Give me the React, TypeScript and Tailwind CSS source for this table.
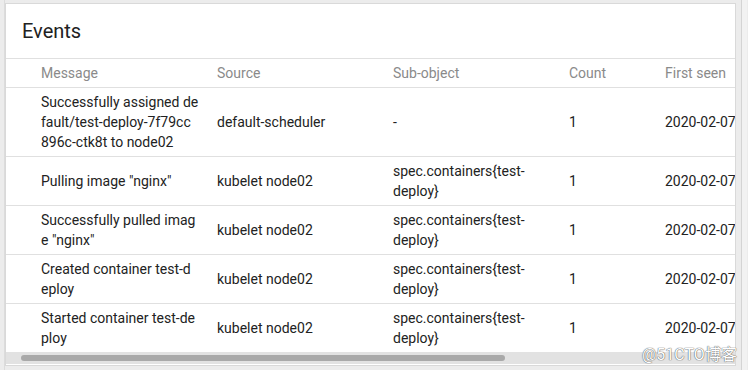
import React from 'react';

type EventRow = {
  message: string[];
  source: string;
  subObject: string[];
  count: string;
  firstSeen: string;
};

const events: EventRow[] = [
  {
    message: ['Successfully assigned de', 'fault/test-deploy-7f79cc', '896c-ctk8t to node02'],
    source: 'default-scheduler',
    subObject: ['-'],
    count: '1',
    firstSeen: '2020-02-07',
  },
  {
    message: ['Pulling image "nginx"'],
    source: 'kubelet node02',
    subObject: ['spec.containers{test-', 'deploy}'],
    count: '1',
    firstSeen: '2020-02-07',
  },
  {
    message: ['Successfully pulled imag', 'e "nginx"'],
    source: 'kubelet node02',
    subObject: ['spec.containers{test-', 'deploy}'],
    count: '1',
    firstSeen: '2020-02-07',
  },
  {
    message: ['Created container test-d', 'eploy'],
    source: 'kubelet node02',
    subObject: ['spec.containers{test-', 'deploy}'],
    count: '1',
    firstSeen: '2020-02-07',
  },
  {
    message: ['Started container test-de', 'ploy'],
    source: 'kubelet node02',
    subObject: ['spec.containers{test-', 'deploy}'],
    count: '1',
    firstSeen: '2020-02-07',
  },
];

const cols = 'grid grid-cols-[35px_176px_176px_176px_96px_200px]';

const Lines: React.FC<{ lines: string[] }> = ({ lines }) => (
  <div className="flex flex-col">
    {lines.map((l, i) => (
      <span key={i} className="whitespace-nowrap">{l}</span>
    ))}
  </div>
);

const EventsTable: React.FC = () => (
  <div className="overflow-hidden">
    <div className={`${cols} h-[29px] items-center border-b border-[#e0e0e0] text-[14px] text-[#8a8a8a]`}>
      <div />
      <div>Message</div>
      <div>Source</div>
      <div>Sub-object</div>
      <div>Count</div>
      <div className="whitespace-nowrap">First seen</div>
    </div>
    {events.map((ev, i) => (
      <div
        key={i}
        className={`${cols} items-center py-[4px] text-[14px] leading-[20px] text-[#222] ${i < events.length - 1 ? 'border-b border-[#e0e0e0]' : ''}`}
      >
        <div />
        <Lines lines={ev.message} />
        <div className="whitespace-nowrap">{ev.source}</div>
        <Lines lines={ev.subObject} />
        <div>{ev.count}</div>
        <div className="whitespace-nowrap">{ev.firstSeen}</div>
      </div>
    ))}
  </div>
);

export default function App() {
  return (
    <div
      className="relative flex h-[370px] w-[748px] overflow-hidden bg-[#ececec]"
      style={{ fontFamily: 'Roboto, "Noto Sans", sans-serif' }}
    >
      <div className="w-[5px] border-r border-[#dcdcdc]" />
      <div className="mt-[3px] flex h-[363px] w-[731px] flex-col border border-[#d9d9d9] bg-white">
        <div className="flex h-[55px] shrink-0 items-center border-b border-[#e0e0e0] pl-[16px] text-[20px] text-[#212121]">
          Events
        </div>
        <EventsTable />
        <div className="flex h-[12px] shrink-0 items-center bg-[#e2e2e2]">
          <div className="ml-[15px] h-[6px] w-[484px] rounded-[3px] bg-[#a9a9a9]" />
        </div>
      </div>
      <div className="ml-[5px] w-[6px] border-l border-[#d4d4d4] bg-[#f2f2f2]" />
      <div
        className="absolute left-[642px] top-[343px] text-[16px] text-white [text-shadow:0_0_1px_#555,0_0_1px_#555]"
        style={{ fontFamily: 'Roboto, "Noto Sans CJK SC", sans-serif' }}
      >
        @51CTO博客
      </div>
    </div>
  );
}
